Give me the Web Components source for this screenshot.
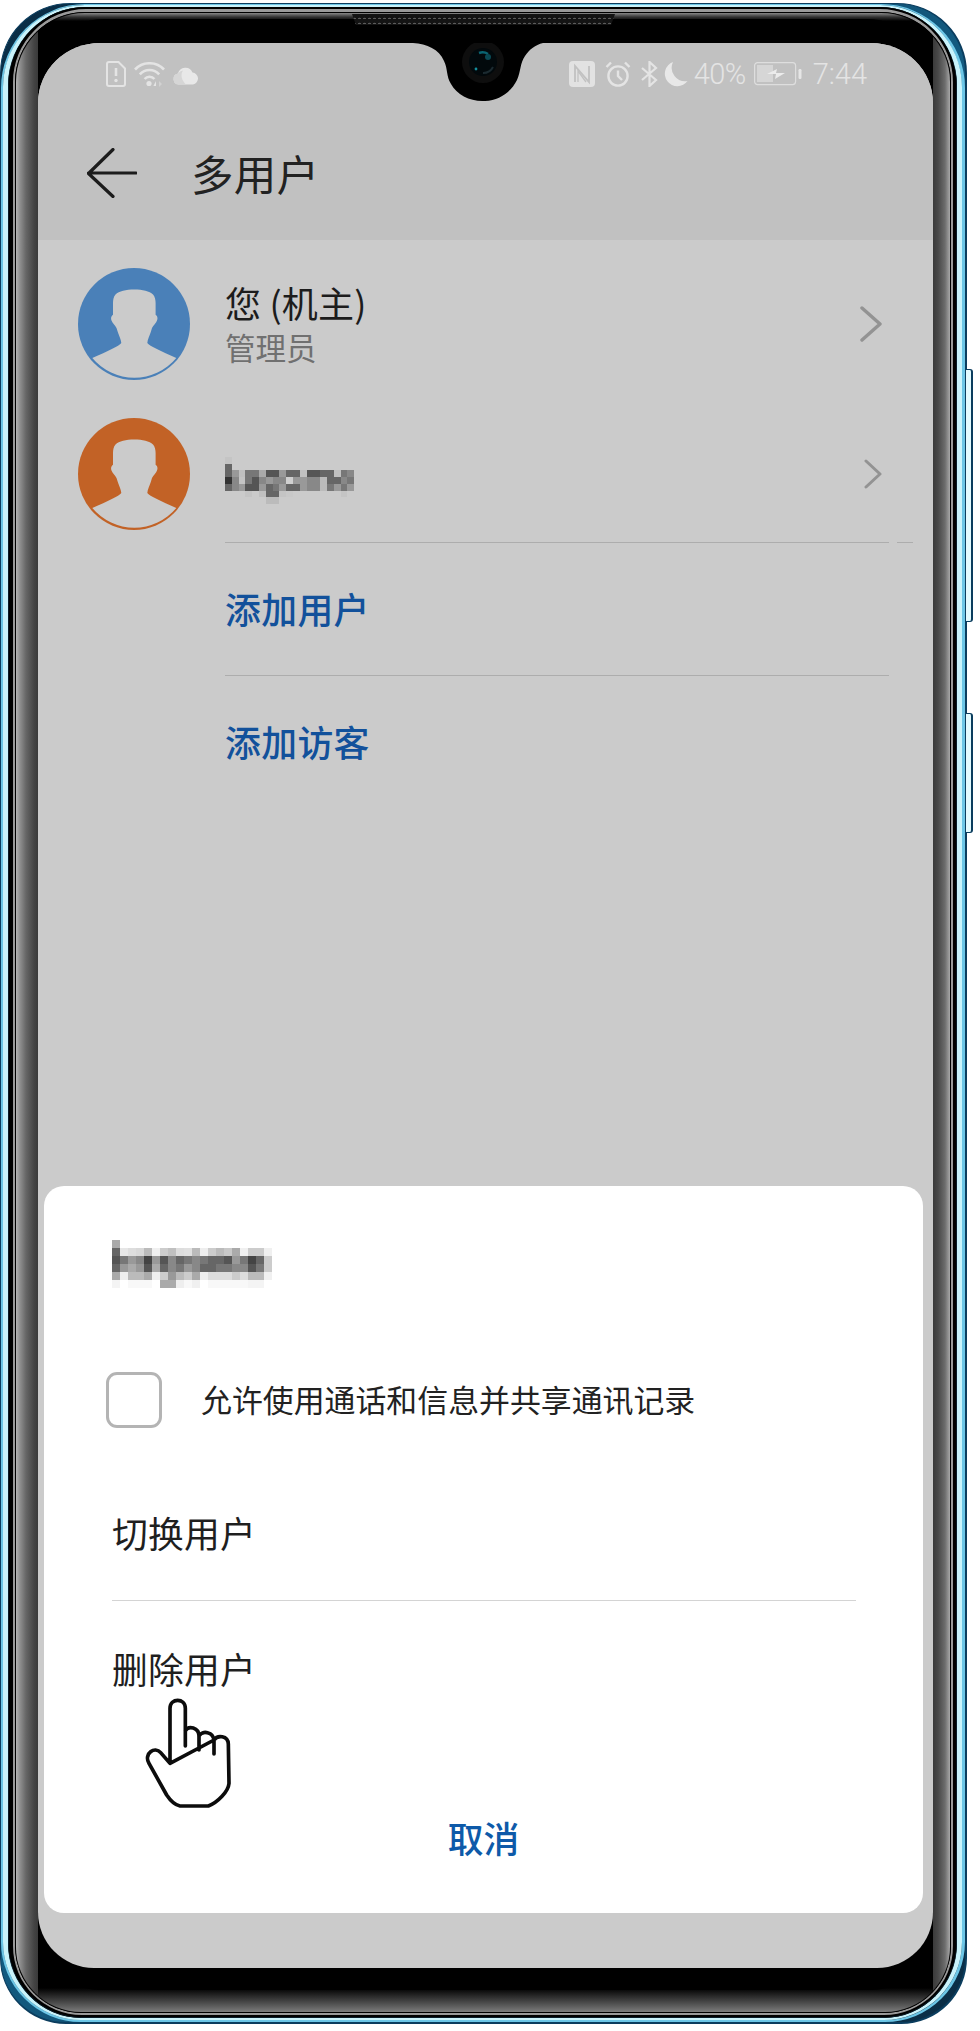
<!DOCTYPE html>
<html lang="zh-CN">
<head>
<meta charset="utf-8">
<title>多用户</title>
<style>
html,body{margin:0;padding:0;background:#fff;}
body{width:980px;height:2031px;overflow:hidden;font-family:"Noto Sans CJK SC","Noto Sans",sans-serif;color:#1f1f1f;}
</style>
</head>
<body>
<phone-frame>
  <app-header title-text="多用户"></app-header>
  <user-list>
    <user-row color="#4a80b8" primary="您 (机主)" secondary="管理员"></user-row>
    <user-row color="#c26226" blurred></user-row>
    <list-divider fragment></list-divider>
    <action-row height="132" lift="2">添加用户</action-row>
    <list-divider></list-divider>
    <action-row height="136" lift="6">添加访客</action-row>
  </user-list>
  <bottom-sheet slot="overlay">
    <pixel-mosaic slot="title" cell="8" data-map="sheet"></pixel-mosaic>
    <sheet-check>允许使用通话和信息并共享通讯记录</sheet-check>
    <sheet-item height="132" divided>切换用户</sheet-item>
    <sheet-item height="138">删除用户</sheet-item>
    <sheet-cancel>取消</sheet-cancel>
  </bottom-sheet>
  <hand-cursor slot="pointer"></hand-cursor>
</phone-frame>

<script>
const define=(name,html)=>{
  customElements.define(name,class extends HTMLElement{
    constructor(){super();this.attachShadow({mode:'open'}).innerHTML=typeof html==='function'?html(this):html;}
  });
};

/* ---------- device frame ---------- */
define('phone-frame',`<style>
:host{display:block;position:relative;width:967px;height:2021px;margin-top:3px;box-sizing:border-box}
.r{box-sizing:border-box;border-style:solid;height:100%}
.r1{border-color:#0b3d5e;border-width:1px 2px 2px 1px;border-radius:70px 70px 66px 66px;background:linear-gradient(135deg,#0a2c44,#17709c 50%,#0a2c44)}
.r2{border-color:#6cc6e6;border-width:1px 3px 2px 2px;border-radius:84px 84px 80px 80px}
.r3{border-color:#c9f3fb;border-width:2px 5px 2px 5px;border-radius:82px 82px 78px 78px;background:#000}
.r4{border-color:#0a1d2a;border-width:0 1px 1px 1px;border-radius:78px 78px 74px 74px}
.r5{border-color:#000;border-width:2px 3px 2px 4px;border-radius:77px 77px 73px 73px}
.r6{border-color:#9a9a9a;border-width:3px 2px 2px 2px;border-radius:73px 73px 69px 69px}
.r7{border-color:#000;border-width:1px 1px 1px 1px;border-radius:70px 70px 66px 66px}
.bezel{box-sizing:border-box;height:100%;position:relative;padding:30px 17px 44px 22px;border-radius:69px 69px 65px 65px;overflow:hidden;
  background:
   linear-gradient(90deg,#b4b4b4 0,#8f8f8f 4px,#666 10px,#444 18px,#3a3a3a 22px,transparent 22px,transparent calc(100% - 17px),#3a3a3a calc(100% - 17px),#484848 calc(100% - 12px),#6d6d6d calc(100% - 5px),#a8a8a8 100%),
   linear-gradient(to top,#7d7d7d 0,#5c5c5c 6px,#383838 13px,#141414 20px,#000 24px,#000 calc(100% - 8px),#333 calc(100% - 4px),#888 100%);}
.black{position:absolute;left:22px;right:17px;top:6px;bottom:22px;background:#000;border-radius:66px 66px 62px 62px;}
.screen{position:relative;height:100%;background:#cbcbcb;border-radius:62px 62px 56px 56px / 60px 60px 56px 56px;overflow:hidden;display:flex;flex-direction:column}
.speaker{position:absolute;left:352px;top:11px;width:263px;height:11px;clip-path:polygon(0 0,100% 0,98.5% 100%,1.5% 100%);
  background:radial-gradient(circle at 2.5px 5px,#5c5c5c 0 1.1px,transparent 1.6px) 0 0/5px 5px,#141414;}
.btn{position:absolute;left:966px;width:7px;box-sizing:border-box;background:#e2fafe;border:solid #0b3d5e;border-width:1px 2px 1px 0;border-radius:0 3px 3px 0}
.b1{top:366px;height:253px}.b2{top:710px;height:120px}
</style>
<div class="r r1"><div class="r r2"><div class="r r3"><div class="r r4"><div class="r r5"><div class="r r6"><div class="r r7">
 <div class="bezel"><div class="black"></div>
  <div class="screen"><slot></slot><slot name="overlay"></slot>
   <svg style="position:absolute;left:375px;top:0" width="140" height="62" viewBox="0 0 140 62"><path d="M0 0C14 1 26 6 31 18C35 26 33 33 38 41C44 52 58 59 72 58C87 57 98 49 104 37C108 28 107 20 112 13C117 6 122 2 130 0Z" fill="#000"/>
    <circle cx="70" cy="19" r="21" fill="#0e0e0e"/><circle cx="70" cy="19" r="14" fill="#02090c"/>
    <path d="M66 10a10 10 0 0 1 9 1" stroke="#0b6472" stroke-width="2.600" fill="none"/><circle cx="75" cy="14" r="3" fill="#0a4a55"/><circle cx="63" cy="26" r="1.400" fill="#148e9c"/>
    <path d="M70 30a11 11 0 0 0 10-6" stroke="#1b2a30" stroke-width="2" fill="none"/></svg>
  </div>
 </div>
</div></div></div></div></div></div></div>
<div class="speaker"></div>
<div class="btn b1"></div><div class="btn b2"></div>
<slot name="pointer"></slot>`);

/* ---------- status bar ---------- */
define('status-bar',`<style>
:host{display:flex;justify-content:space-between;align-items:center;height:26px;padding:18px 66px 0 68px;color:#e4e4e4;font:300 29px/26px Roboto,"Liberation Sans",sans-serif}
.g{display:flex;align-items:center}
svg{display:block;flex:none}
.t40{margin:0 8px 0 6px;letter-spacing:-.6px}
</style>
<div class="g" style="gap:8px">
 <svg width="20" height="26" viewBox="0 0 20 26" fill="none" stroke="#e4e4e4" stroke-width="2"><path d="M3 1H12.5L19 7.5V23a2 2 0 0 1-2 2H3a2 2 0 0 1-2-2V3a2 2 0 0 1 2-2z"/><path d="M10 7v8" stroke-width="2.6"/><circle cx="10" cy="19.5" r="1.7" fill="#e4e4e4" stroke="none"/></svg>
 <svg width="31" height="25" viewBox="0 0 31 25" fill="none" stroke="#e4e4e4" stroke-width="2.6"><path d="M1 7.5a20 20 0 0 1 29 0"/><path d="M5.8 12.4a13 13 0 0 1 19.4 0"/><path d="M10.6 17a6.5 6.5 0 0 1 9.8 0"/><circle cx="15" cy="21.5" r="2.6" fill="#e4e4e4" stroke="none"/><path d="M22 24V19l-2.6 5z" fill="#e4e4e4" stroke="none"/><path d="M25 19v6l3-3z" fill="#d2d2d2" stroke="none"/></svg>
 <svg width="26" height="18" viewBox="0 0 26 18" style="margin-top:3px"><path d="M6 17.5A5.5 5.5 0 0 1 5 6.6 7.6 7.6 0 0 1 19.5 5.6 6 6 0 0 1 20 17.5Z" fill="#e8e8e8"/><path d="M6 17.5A5.500 5.500 0 0 1 5 6.600 7 7 0 0 1 10 3.600C7 8 9 14 13 17.500Z" fill="#d6d6d6"/></svg>
</div>
<div class="g">
 <svg width="26" height="26" viewBox="0 0 26 26" style="margin-right:10px"><rect width="26" height="26" rx="4" fill="#e2e2e2"/><path d="M6 21V5l14 16V5" fill="none" stroke="#c1c1c1" stroke-width="1.8"/><path d="M9 21V10l8 11" fill="none" stroke="#c1c1c1" stroke-width="1.3"/></svg>
 <svg width="26" height="26" viewBox="0 0 26 26" fill="none" stroke="#e4e4e4" stroke-width="2.4" style="margin-right:10px"><circle cx="13" cy="15" r="9.6"/><path d="M13 9.500V15l4 4"/><path d="M1.500 6L6 1.500M24.500 6L20 1.500"/></svg>
 <svg width="17" height="26" viewBox="0 0 17 26" fill="none" stroke="#e4e4e4" stroke-width="2.2" style="margin-right:3px"><path d="M1 7l14 12-6.500 6V1L15 7 1 19"/></svg>
 <svg width="27" height="27" viewBox="0 0 27 27"><path d="M12 1A12.500 12.500 0 1 0 26.500 20 13.500 13.500 0 0 1 12 1Z" fill="#e8e8e8"/></svg>
 <span class="t40">40%</span>
 <svg width="48" height="24" viewBox="0 0 48 24" style="margin-right:11px"><rect x=".6" y=".6" width="41" height="22" rx="3" fill="none" stroke="#dedede" stroke-width="1.2"/><rect x="3" y="3" width="16" height="17" fill="#d6d6d6"/><path d="M13 12l10-5-1 4h9l-10 6 1-5z" fill="#ececec"/><rect x="44.5" y="7" width="3" height="10" rx="1.2" fill="#e6e6e6"/></svg>
 <span>7:44</span>
</div>`);

/* ---------- app header ---------- */
define('app-header',h=>`<style>
:host{display:block;background:#c1c1c1;height:197px;flex:none}
.bar{display:flex;align-items:center;height:91px;margin-top:40px;padding-left:49px;gap:54px}
h1{margin:0;font:400 42.500px/60px "Noto Sans CJK SC",sans-serif;color:#222;letter-spacing:.3px}
svg{display:block;flex:none}
</style>
<status-bar></status-bar>
<div class="bar">
 <svg width="50" height="50" viewBox="0 0 50 50" fill="none" stroke="#1c1c1c" stroke-width="3.2" stroke-linecap="round" stroke-linejoin="round"><path d="M26 1.500L1.500 25.500 26 48.500M1.500 25H49"/></svg>
 <h1>${h.getAttribute('title-text')}</h1>
</div>`);

/* ---------- list ---------- */
define('user-list',`<style>:host{display:block;padding-top:28px;flex:1}</style><slot></slot>`);

const SHEET_MAP=[
 "aa",
 "66 e6 dd d8 bb f0 cc c0 dd e0 bb ee cc bb c8 aa f0 cc cc f0",
 "55 77 99 88 44 99 55 88 66 77 88 77 66 66 55 99 77 44 66 cc",
 "66 99 aa 99 55 aa 66 88 77 99 88 66 66 77 77 88 88 55 77 cc",
 "aa ee bb bb aa ee cc 99 bb cc aa ee dd dd dd cc dd bb bb f0",
 "f4 ff f8 f8 f8 ff aa aa ee f8 f0 ff f8 f8 f8 f8 f8 f4 f4 ff"
];
const LIST_MAP=[
 "c4",
 "66",
 "66 99 c0 77 77 aa 55 55 99 66 66 c0 55 55 66 66 c0 77 88",
 "33 88 c4 77 55 88 99 88 88 d0 99 99 88 88 bb 66 66 88 77",
 "66 88 99 55 55 99 66 77 99 66 66 99 88 88 bb 77 99 77 99",
 "-- -- -- c4 -- c0 66 66 c4 c8 -- -- -- -- -- -- -- c4 --",
 "-- -- -- -- -- -- bb bb"
];
const mosaicCells=(m,cell)=>m.map(r=>{
  const cols=r.trim().split(/\s+/);
  return `<div style="display:flex;height:${cell}px">`+cols.map(c=>{
    const bg=c==='--'?'transparent':`#${c}${c}${c}`;
    return `<i style="display:block;flex:none;width:${cell}px;height:${cell}px;background:${bg}"></i>`;
  }).join('')+`</div>`;
}).join('');
define('pixel-mosaic',h=>{
  const m=h.getAttribute('data-map')==='sheet'?SHEET_MAP:LIST_MAP;
  const cell=+h.getAttribute('cell')||8;
  return `<style>:host{display:block;flex:none}</style>${mosaicCells(m,cell)}`;
});

define('user-avatar',h=>{
  const c=h.getAttribute('color');
  return `<style>:host{display:block;flex:none;width:112px;height:112px}svg{display:block}</style>
  <svg width="112" height="112" viewBox="0 0 112 112"><circle cx="56" cy="56" r="56" fill="${c}"/>
  <path d="M56.300 21.500C48 21.500 41 23 37.500 26.500 35.500 28.500 35 32 35 35L35 46.700C33 48 32.700 50.500 33.500 52.500 34.600 55.500 37 57 38.500 60L39.800 64C41 68 43 71 43.300 75 41 78 30 83 14.300 90A54.600 54.600 0 0 0 98.300 90C83 83 71.600 78 69.300 75 69.600 71 71.600 68 72.800 64L74 60C75.500 57 78 55.500 79 52.500 79.900 50.500 79.600 48 77.600 46.700L77.600 35C77.600 32 77 28.500 75 26.500 71.500 23 64.600 21.500 56.300 21.500Z" fill="#cbcbcb"/></svg>`;
});

define('user-row',h=>{
  const blurred=h.hasAttribute('blurred');
  const chevron=blurred
   ?`<svg width="18" height="30" viewBox="0 0 18 30" fill="none" stroke="#939393" stroke-width="3" stroke-linecap="round" stroke-linejoin="round"><path d="M2 2l14 13L2 28"/></svg>`
   :`<svg width="22" height="36" viewBox="0 0 22 36" fill="none" stroke="#939393" stroke-width="3.400" stroke-linecap="round" stroke-linejoin="round"><path d="M2 2l18 16L2 34"/></svg>`;
  const text=blurred
   ?`<pixel-mosaic cell="6.8" data-map="list" style="margin-top:14px"></pixel-mosaic>`
   :`<div class="p">${h.getAttribute('primary')}</div><div class="s">${h.getAttribute('secondary')}</div>`;
  return `<style>
  :host{display:flex;align-items:center;height:112px;padding-left:40px;padding-right:51px;margin-bottom:38px}
  :host([blurred]){margin-bottom:12px}
  .txt{flex:1;margin-left:35px;min-width:0;margin-top:-1px}
  .p{font:400 36px/44px "Noto Sans CJK SC",sans-serif;color:#1c1c1c;white-space:nowrap;letter-spacing:.2px}
  .s{font:400 30.500px/42px "Noto Sans CJK SC",sans-serif;color:#707070;white-space:nowrap;margin-top:2px}
  svg{display:block;flex:none}
  </style>
  <user-avatar color="${h.getAttribute('color')}"></user-avatar>
  <div class="txt">${text}</div>${chevron}`;
});

define('list-divider',h=>`<style>
:host{display:flex;height:1px;padding-left:187px;gap:8px}
b{display:block;height:1px;background:#adadad}
.m{width:664px}.f{width:16px}
</style><b class="m"></b>${h.hasAttribute('fragment')?'<b class="f"></b>':''}`);

define('action-row',h=>`<style>
:host{display:flex;align-items:center;height:${h.getAttribute('height')}px;box-sizing:border-box;padding:0 0 ${h.getAttribute('lift')}px 187px;
 font:500 35.800px/50px "Noto Sans CJK SC",sans-serif;color:#12519b;letter-spacing:.4px}
</style><slot></slot>`);

/* ---------- bottom sheet ---------- */
define('bottom-sheet',`<style>
:host{position:absolute;left:6px;right:10px;bottom:55px;height:727px;box-sizing:border-box;background:#fff;border-radius:20px;padding-top:54px;display:block}
.title{padding-left:68px;height:48px}
</style><div class="title"><slot name="title"></slot></div><slot></slot>`);

define('sheet-check',`<style>
:host{display:flex;align-items:center;margin:84px 0 40px 62px;height:56px;gap:39px;font:400 30.900px/44px "Noto Sans CJK SC",sans-serif;color:#222;white-space:nowrap}
i{display:block;flex:none;box-sizing:border-box;width:56px;height:56px;border:3px solid #b4b4b4;border-radius:11px}
span{margin-top:-2px}
</style><i></i><span><slot></slot></span>`);

define('sheet-item',h=>`<style>
:host{display:block;margin:0 67px 0 68px;height:${h.getAttribute('height')}px;box-sizing:border-box}
:host([divided]){border-bottom:1px solid #d4d4d4;box-sizing:content-box}
div{display:flex;align-items:center;height:100%;box-sizing:border-box;padding-bottom:5px;font:400 35.800px/50px "Noto Sans CJK SC",sans-serif;color:#1f1f1f;letter-spacing:.2px}
</style><div><slot></slot></div>`);

define('sheet-cancel',`<style>
:host{display:flex;justify-content:center;align-items:center;height:154px;padding-top:21px;font:500 35.800px/50px "Noto Sans CJK SC",sans-serif;color:#0e5aa9}
</style><slot></slot>`);

/* ---------- pointer ---------- */
define('hand-cursor',`<style>
:host{display:block;position:absolute;left:100px;top:1637px;width:200px;height:200px;pointer-events:none}
svg{display:block}
</style>
<svg width="200" height="200" viewBox="0 0 600 600"><path d="M210 370L210 205C210 173 256 173 256 205L256 318M256 272C266 256 296 262 297 288L297 330M297 288C306 270 341 275 342 302L342 342M342 300C352 284 384 286 385 312L387 430C385 455 352 488 325 498L240 498C225 495 210 480 200 465L147 370C130 340 165 318 182 338L210 370Z" fill="#fff" stroke="#0c0c0c" stroke-width="11" stroke-linejoin="round" stroke-linecap="round"/></svg>`);
</script>
</body>
</html>
